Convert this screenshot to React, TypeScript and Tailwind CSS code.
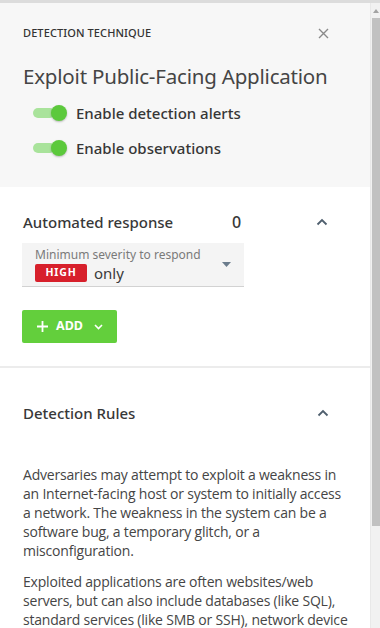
import React from "react";

const heading = { fontFamily: '"Noto Sans", "Open Sans", sans-serif' };
const body = { fontFamily: '"Open Sans", "Noto Sans", sans-serif' };

function Toggle() {
  return (
    <div className="relative flex h-4 w-[34px] shrink-0 items-center">
      <div className="h-[10px] w-[22px] rounded-full bg-[#a9e39b]" />
      <div className="absolute right-0 top-0 h-4 w-4 rounded-full bg-[#5cc93c] shadow-[0_1px_2px_rgba(0,0,0,0.25)]" />
    </div>
  );
}

function ChevronUp() {
  return (
    <svg width="12" height="8" viewBox="0 0 12 8" className="text-[#4f5f6e]">
      <path d="M1.5 6.5 6 2l4.5 4.5" fill="none" stroke="currentColor" strokeWidth="1.8" />
    </svg>
  );
}

export default function App() {
  return (
    <div className="flex h-[628px] w-[380px] flex-col overflow-hidden bg-white">
      <div className="h-[3px] shrink-0 bg-[#dcdcdc]" />
      <div className="flex min-h-0 flex-1">
        <main className="min-w-0 flex-1 overflow-hidden">
          {/* Header */}
          <section className="h-[184px] bg-[#f7f7f7] pl-[23px] pr-[41px] pt-[22px]" style={heading}>
            <div className="flex items-center justify-between">
              <p className="text-[11px] font-medium tracking-[0.1px] text-[#333]">DETECTION TECHNIQUE</p>
              <svg width="11" height="11" viewBox="0 0 11 11" className="mt-[1px] text-[#8a8a8a]">
                <path d="M1 1l9 9M10 1l-9 9" stroke="currentColor" strokeWidth="1.4" />
              </svg>
            </div>
            <h1 className="mt-[20px] whitespace-nowrap text-[20.5px] leading-[28px] tracking-[-0.2px] text-[#454545]">
              Exploit Public-Facing Application
            </h1>
            <div className="mt-[12px] flex flex-col gap-[13px] pl-[10px]">
              <label className="flex items-center gap-[9px]">
                <Toggle />
                <span className="text-[15px] font-medium leading-[22px] text-[#363636]">Enable detection alerts</span>
              </label>
              <label className="flex items-center gap-[9px]">
                <Toggle />
                <span className="text-[15px] font-medium leading-[22px] text-[#363636]">Enable observations</span>
              </label>
            </div>
          </section>

          {/* Automated response */}
          <section className="border-b-2 border-[#ececec] pb-[23px] pl-[22px] pr-[41px] pt-[23px]">
            <div className="flex items-center" style={heading}>
              <h2 className="w-[210px] pl-[1px] text-[15px] font-medium leading-[22px] text-[#383838]">
                Automated response
              </h2>
              <span className="text-[16px] font-medium text-[#383838]">0</span>
              <div className="ml-auto pr-[1px]">
                <ChevronUp />
              </div>
            </div>
            <div className="mt-[9px] flex h-[44px] w-[222px] items-center border-b border-[#d2d2d2] bg-[#f4f4f4] pl-[13px] pr-[13px]" style={heading}>
              <div className="flex-1">
                <p className="text-[12px] leading-[14px] text-[#7a7a7a]">Minimum severity to respond</p>
                <div className="mt-[2px] flex items-center gap-[7px]">
                  <span className="flex h-[18px] w-[52px] items-center justify-center rounded-[2px] bg-[#d7202b] text-[10.5px] font-bold tracking-[0.8px] text-white">
                    HIGH
                  </span>
                  <span className="text-[15px] leading-[18px] text-[#3a3a3a]">only</span>
                </div>
              </div>
              <svg width="9" height="5" viewBox="0 0 9 5" className="text-[#6b7c8c]">
                <path d="M0 0h9L4.5 5z" fill="currentColor" />
              </svg>
            </div>
            <button className="mt-[23px] flex h-[33px] w-[95px] items-center gap-[8px] rounded-[2px] bg-[#63cf3c] pl-[15px] text-white" style={heading}>
              <svg width="11" height="11" viewBox="0 0 11 11">
                <path d="M5.5 0v11M0 5.5h11" stroke="currentColor" strokeWidth="1.8" />
              </svg>
              <span className="text-[12.5px] font-bold leading-none">ADD</span>
              <svg width="9" height="6" viewBox="0 0 9 6" className="ml-[3px]">
                <path d="M1 1l3.5 3.5L8 1" fill="none" stroke="currentColor" strokeWidth="1.6" />
              </svg>
            </button>
          </section>

          {/* Detection Rules */}
          <section className="pl-[23px] pr-[10px] pt-[34px]">
            <div className="flex items-center justify-between pr-[31px]" style={heading}>
              <h2 className="text-[15px] font-medium leading-[22px] text-[#383838]">Detection Rules</h2>
              <ChevronUp />
            </div>
            <div className="mt-[41px] w-[328px] text-[14px] leading-[19px] tracking-[-0.2px] text-[#454545]" style={body}>
              <p className="w-[322px]">
                Adversaries may attempt to exploit a weakness in an Internet-facing host or system to initially
                access a network. The weakness in the system can be a software bug, a temporary glitch, or a
                misconfiguration.
              </p>
              <p className="mt-[12px]">
                Exploited applications are often websites/web servers, but can also include databases (like SQL),
                standard services (like SMB or SSH), network device administration and management protocols, and
                other applications with Internet accessible sockets.
              </p>
            </div>
          </section>
        </main>

        {/* Scrollbar */}
        <div className="flex w-[10px] shrink-0 flex-col border-l border-[#e8e8e8] bg-[#f1f1f1]">
          <div className="flex h-[15px] items-center justify-center">
            <svg width="6" height="4" viewBox="0 0 6 4">
              <path d="M0 4 3 0l3 4z" fill="#a3a3a3" />
            </svg>
          </div>
          <div className="mx-auto h-[508px] w-[8px] bg-[#c1c1c1]" />
        </div>
      </div>
    </div>
  );
}
